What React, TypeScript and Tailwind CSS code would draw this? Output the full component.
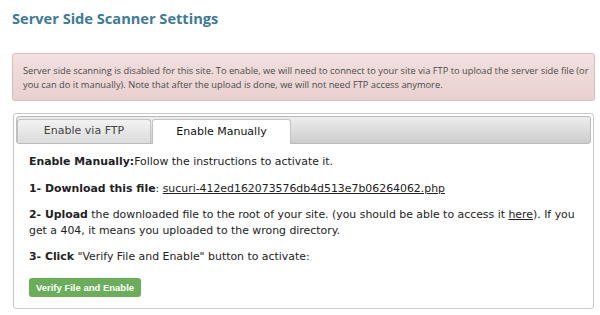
import React from 'react';

const App: React.FC = () => {
  return (
    <div className="w-[600px] h-[315px] bg-white overflow-hidden">
      <div className="pl-[12px] pr-[5px] pt-[7px]">
        <h2 className="text-[14.6px] leading-[22px] font-bold text-[#3c7b97] font-['Open_Sans',sans-serif]">
          Server Side Scanner Settings
        </h2>

        <div className="mt-[24px] h-[48px] rounded-[3px] border border-[#dcbcbd] bg-gradient-to-b from-[#f3e0e0] to-[#e9d0d0] px-[10px] pt-[10px] font-['Open_Sans',sans-serif] text-[9.3px] leading-[14px] text-[#4a4a4a] whitespace-nowrap">
          Server side scanning is disabled for this site. To enable, we will need to connect to your site via FTP to upload the server side file (or
          <br />
          you can do it manually). Note that after the upload is done, we will not need FTP access anymore.
        </div>

        <div className="mt-[12px] ml-[1px] mr-[1px] h-[196px] rounded-[3px] border border-[#c8c8c8] p-[2px] font-['DejaVu_Sans',Verdana,sans-serif] text-[10.9px] text-[#222]">
          <div className="flex h-[28px] items-end gap-[1px] rounded-[3px] border border-[#bcbcbc] bg-gradient-to-b from-[#ededed] to-[#cdcdcd]">
            <div className="flex h-[24px] w-[134px] items-center justify-center rounded-t-[3px] border border-b-0 border-[#c2c2c2] bg-gradient-to-b from-[#f2f2f2] to-[#dcdcdc] text-[11px] text-[#444]">
              Enable via FTP
            </div>
            <div className="-mb-px flex h-[25px] w-[139px] items-center justify-center rounded-t-[3px] border border-b-0 border-[#c2c2c2] bg-white text-[11px] text-[#111]">
              Enable Manually
            </div>
          </div>

          <div className="px-[13px] pt-[10px] leading-[16px] whitespace-nowrap">
            <p>
              <b>Enable Manually:</b>Follow the instructions to activate it.
            </p>
            <p className="mt-[11px]">
              <b>1- Download this file</b>: <span className="underline">sucuri-412ed162073576db4d513e7b06264062.php</span>
            </p>
            <p className="mt-[10px]">
              <b>2- Upload</b> the downloaded file to the root of your site. (you should be able to access it <span className="underline">here</span>). If you
              <br />
              get a 404, it means you uploaded to the wrong directory.
            </p>
            <p className="mt-[10px]">
              <b>3- Click</b> "Verify File and Enable" button to activate:
            </p>
            <button className="mt-[13px] h-[19px] w-[112px] rounded-[3px] bg-[#6aae5a] font-['Liberation_Sans',Arial,sans-serif] text-[9.5px] font-bold leading-[19px] text-white">
              Verify File and Enable
            </button>
          </div>
        </div>
      </div>
    </div>
  );
};

export default App;
